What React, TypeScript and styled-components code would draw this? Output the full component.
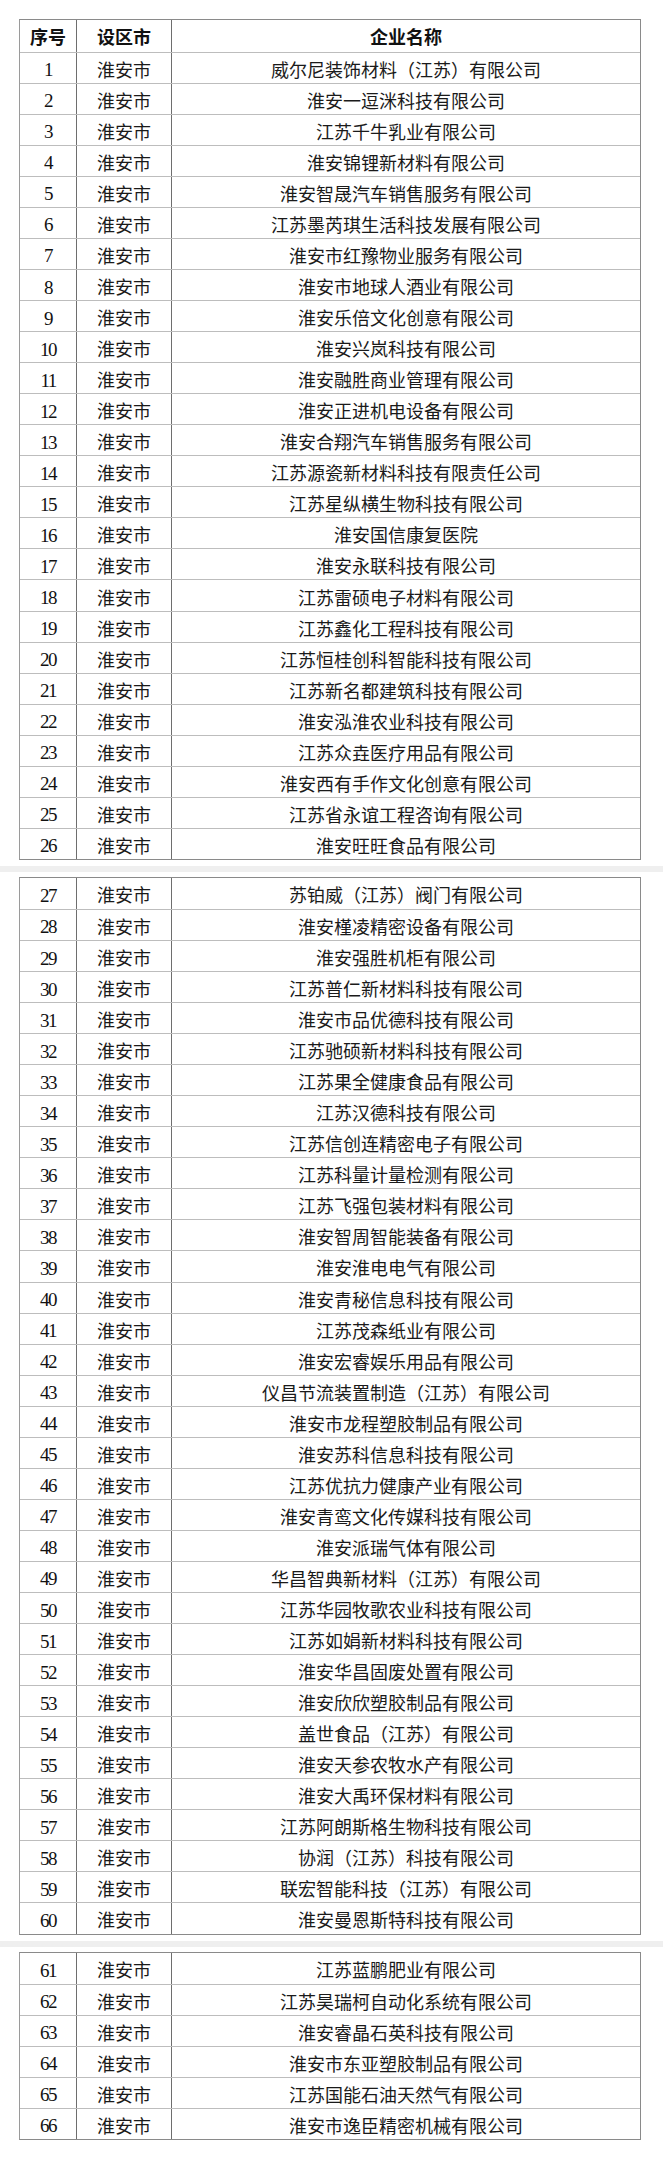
import React from "react";
import styled, { createGlobalStyle } from "styled-components";

const GlobalStyle = createGlobalStyle`
  html, body { margin: 0; padding: 0; background: #ffffff; }
  body { font-family: "Noto Sans CJK SC", "Noto Sans", sans-serif; color: #1a1a1a; }
`;

const companies: string[] = [
  "威尔尼装饰材料（江苏）有限公司",
  "淮安一逗洣科技有限公司",
  "江苏千牛乳业有限公司",
  "淮安锦锂新材料有限公司",
  "淮安智晟汽车销售服务有限公司",
  "江苏墨芮琪生活科技发展有限公司",
  "淮安市红豫物业服务有限公司",
  "淮安市地球人酒业有限公司",
  "淮安乐倍文化创意有限公司",
  "淮安兴岚科技有限公司",
  "淮安融胜商业管理有限公司",
  "淮安正进机电设备有限公司",
  "淮安合翔汽车销售服务有限公司",
  "江苏源瓷新材料科技有限责任公司",
  "江苏星纵横生物科技有限公司",
  "淮安国信康复医院",
  "淮安永联科技有限公司",
  "江苏雷硕电子材料有限公司",
  "江苏鑫化工程科技有限公司",
  "江苏恒桂创科智能科技有限公司",
  "江苏新名都建筑科技有限公司",
  "淮安泓淮农业科技有限公司",
  "江苏众垚医疗用品有限公司",
  "淮安西有手作文化创意有限公司",
  "江苏省永谊工程咨询有限公司",
  "淮安旺旺食品有限公司",
  "苏铂威（江苏）阀门有限公司",
  "淮安槿凌精密设备有限公司",
  "淮安强胜机柜有限公司",
  "江苏普仁新材料科技有限公司",
  "淮安市品优德科技有限公司",
  "江苏驰硕新材料科技有限公司",
  "江苏果全健康食品有限公司",
  "江苏汉德科技有限公司",
  "江苏信创连精密电子有限公司",
  "江苏科量计量检测有限公司",
  "江苏飞强包装材料有限公司",
  "淮安智周智能装备有限公司",
  "淮安淮电电气有限公司",
  "淮安青秘信息科技有限公司",
  "江苏茂森纸业有限公司",
  "淮安宏睿娱乐用品有限公司",
  "仪昌节流装置制造（江苏）有限公司",
  "淮安市龙程塑胶制品有限公司",
  "淮安苏科信息科技有限公司",
  "江苏优抗力健康产业有限公司",
  "淮安青鸾文化传媒科技有限公司",
  "淮安派瑞气体有限公司",
  "华昌智典新材料（江苏）有限公司",
  "江苏华园牧歌农业科技有限公司",
  "江苏如娟新材料科技有限公司",
  "淮安华昌固废处置有限公司",
  "淮安欣欣塑胶制品有限公司",
  "盖世食品（江苏）有限公司",
  "淮安天参农牧水产有限公司",
  "淮安大禹环保材料有限公司",
  "江苏阿朗斯格生物科技有限公司",
  "协润（江苏）科技有限公司",
  "联宏智能科技（江苏）有限公司",
  "淮安曼恩斯特科技有限公司",
  "江苏蓝鹏肥业有限公司",
  "江苏昊瑞柯自动化系统有限公司",
  "淮安睿晶石英科技有限公司",
  "淮安市东亚塑胶制品有限公司",
  "江苏国能石油天然气有限公司",
  "淮安市逸臣精密机械有限公司",
];

const Page = styled.div`
  display: flex;
  flex-direction: column;
  width: 663px;
  padding-top: 19px;
  min-height: 2160px;
  box-sizing: border-box;
`;

const Table = styled.div`
  margin-left: 19px;
  width: 622px;
  box-sizing: border-box;
  border: 1px solid #8a8a8a;
  border-left-color: #9a9a9a;
  display: flex;
  flex-direction: column;
  background: #fff;
`;

const Row = styled.div<{ $head?: boolean; $first?: boolean }>`
  display: grid;
  grid-template-columns: 56px 95px 1fr;
  height: ${(p) => (p.$head ? "31.7px" : "31.05px")};
  box-sizing: border-box;
  border-top: ${(p) => (p.$first ? "none" : "1px solid #bdbdbd")};
`;

const Cell = styled.div<{ $first?: boolean }>`
  display: flex;
  align-items: center;
  justify-content: center;
  border-left: ${(p) => (p.$first ? "none" : "1px solid #6e6e6e")};
  font-size: 18px;
  line-height: 1;
  padding-top: 2px;
  white-space: nowrap;
  overflow: hidden;
`;

const HeadCell = styled(Cell)`
  font-weight: 700;
  color: #111;
  padding-top: 0;
`;

const NumCell = styled(Cell)`
  font-family: "Liberation Serif", "Times New Roman", serif;
  font-size: 19px;
  letter-spacing: -1.6px;
  padding-top: 4px;
  color: #111;
`;

const Separator = styled.div`
  height: 17px;
  display: flex;
  align-items: center;
  padding-top: 1px;
  box-sizing: border-box;
`;

const Band = styled.div`
  width: 100%;
  height: 6px;
  background: #efefef;
`;

type RowData = { n: number; name: string };

const DataRows: React.FC<{ rows: RowData[]; firstNoBorder?: boolean }> = ({ rows, firstNoBorder }) => (
  <>
    {rows.map((r, i) => (
      <Row key={r.n} $first={firstNoBorder && i === 0}>
        <NumCell $first>{r.n}</NumCell>
        <Cell>淮安市</Cell>
        <Cell>{r.name}</Cell>
      </Row>
    ))}
  </>
);

export default function App() {
  const all: RowData[] = companies.map((name, i) => ({ n: i + 1, name }));
  const t1 = all.slice(0, 26);
  const t2 = all.slice(26, 60);
  const t3 = all.slice(60);
  return (
    <>
      <GlobalStyle />
      <Page>
        <Table>
          <Row $head $first>
            <HeadCell $first>序号</HeadCell>
            <HeadCell>设区市</HeadCell>
            <HeadCell>企业名称</HeadCell>
          </Row>
          <DataRows rows={t1} />
        </Table>
        <Separator>
          <Band />
        </Separator>
        <Table>
          <DataRows rows={t2} firstNoBorder />
        </Table>
        <Separator>
          <Band />
        </Separator>
        <Table>
          <DataRows rows={t3} firstNoBorder />
        </Table>
      </Page>
    </>
  );
}
